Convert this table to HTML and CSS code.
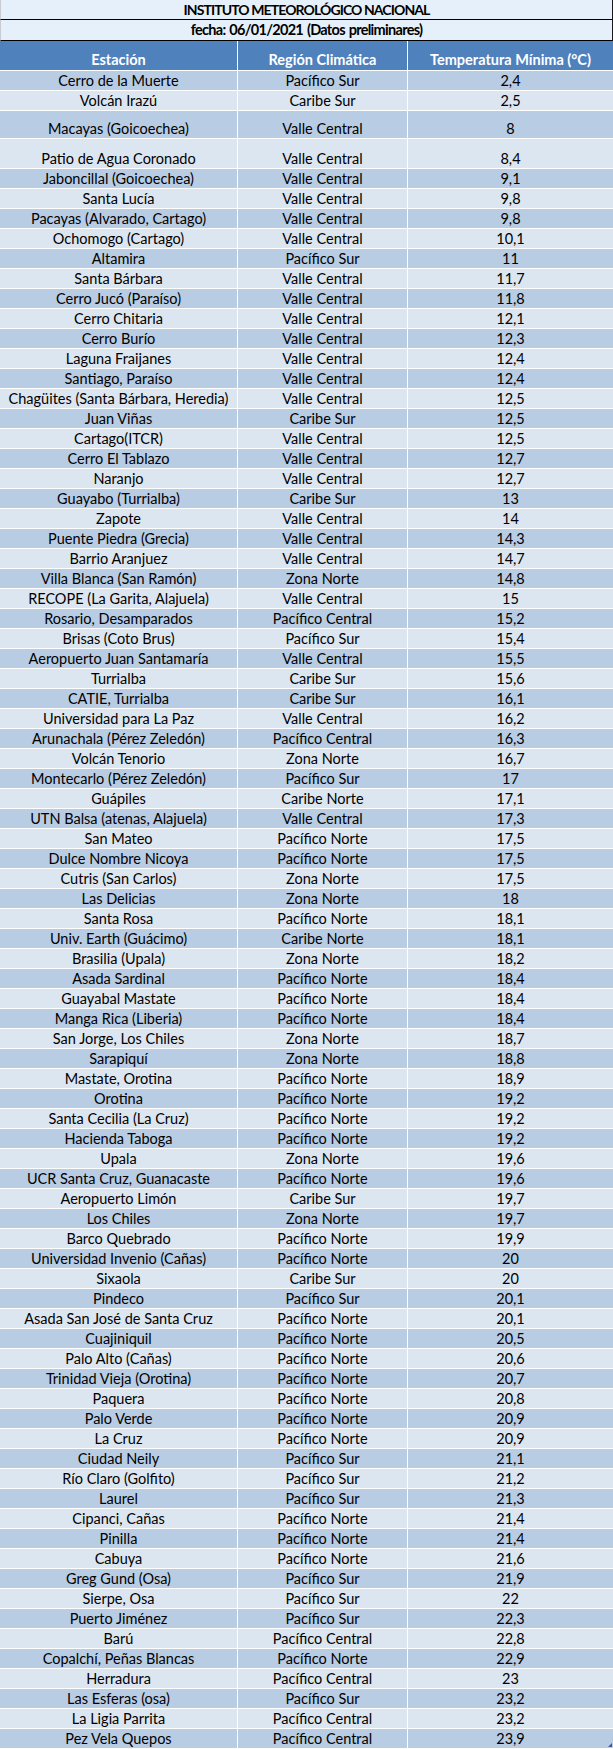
FILE: index.html
```html
<!DOCTYPE html>
<html lang="es">
<head>
<meta charset="utf-8">
<title>Temperatura Mínima</title>
<link rel="stylesheet" href="styles.css">
</head>
<body>
<div class="sheet">
  <div class="title">INSTITUTO METEOROLÓGICO NACIONAL</div>
  <div class="title sub">fecha: 06/01/2021 (Datos preliminares)</div>
  <div class="grid">
    <div class="hd">Estación</div><div class="hd">Región Climática</div><div class="hd">Temperatura Mínima (°C)</div>
    <div class="c d">Cerro de la Muerte</div><div class="c d">Pacífico Sur</div><div class="c d">2,4</div>
    <div class="c l">Volcán Irazú</div><div class="c l">Caribe Sur</div><div class="c l">2,5</div>
    <div class="c d">Macayas (Goicoechea)</div><div class="c d">Valle Central</div><div class="c d">8</div>
    <div class="c l">Patio de Agua Coronado</div><div class="c l">Valle Central</div><div class="c l">8,4</div>
    <div class="c d">Jaboncillal (Goicoechea)</div><div class="c d">Valle Central</div><div class="c d">9,1</div>
    <div class="c l">Santa Lucía</div><div class="c l">Valle Central</div><div class="c l">9,8</div>
    <div class="c d">Pacayas (Alvarado, Cartago)</div><div class="c d">Valle Central</div><div class="c d">9,8</div>
    <div class="c l">Ochomogo (Cartago)</div><div class="c l">Valle Central</div><div class="c l">10,1</div>
    <div class="c d">Altamira</div><div class="c d">Pacífico Sur</div><div class="c d">11</div>
    <div class="c l">Santa Bárbara</div><div class="c l">Valle Central</div><div class="c l">11,7</div>
    <div class="c d">Cerro Jucó (Paraíso)</div><div class="c d">Valle Central</div><div class="c d">11,8</div>
    <div class="c l">Cerro Chitaria</div><div class="c l">Valle Central</div><div class="c l">12,1</div>
    <div class="c d">Cerro Burío</div><div class="c d">Valle Central</div><div class="c d">12,3</div>
    <div class="c l">Laguna Fraijanes</div><div class="c l">Valle Central</div><div class="c l">12,4</div>
    <div class="c d">Santiago, Paraíso</div><div class="c d">Valle Central</div><div class="c d">12,4</div>
    <div class="c l">Chagüites (Santa Bárbara, Heredia)</div><div class="c l">Valle Central</div><div class="c l">12,5</div>
    <div class="c d">Juan Viñas</div><div class="c d">Caribe Sur</div><div class="c d">12,5</div>
    <div class="c l">Cartago(ITCR)</div><div class="c l">Valle Central</div><div class="c l">12,5</div>
    <div class="c d">Cerro El Tablazo</div><div class="c d">Valle Central</div><div class="c d">12,7</div>
    <div class="c l">Naranjo</div><div class="c l">Valle Central</div><div class="c l">12,7</div>
    <div class="c d">Guayabo (Turrialba)</div><div class="c d">Caribe Sur</div><div class="c d">13</div>
    <div class="c l">Zapote</div><div class="c l">Valle Central</div><div class="c l">14</div>
    <div class="c d">Puente Piedra (Grecia)</div><div class="c d">Valle Central</div><div class="c d">14,3</div>
    <div class="c l">Barrio Aranjuez</div><div class="c l">Valle Central</div><div class="c l">14,7</div>
    <div class="c d">Villa Blanca (San Ramón)</div><div class="c d">Zona Norte</div><div class="c d">14,8</div>
    <div class="c l">RECOPE (La Garita, Alajuela)</div><div class="c l">Valle Central</div><div class="c l">15</div>
    <div class="c d">Rosario, Desamparados</div><div class="c d">Pacífico Central</div><div class="c d">15,2</div>
    <div class="c l">Brisas (Coto Brus)</div><div class="c l">Pacífico Sur</div><div class="c l">15,4</div>
    <div class="c d">Aeropuerto Juan Santamaría</div><div class="c d">Valle Central</div><div class="c d">15,5</div>
    <div class="c l">Turrialba</div><div class="c l">Caribe Sur</div><div class="c l">15,6</div>
    <div class="c d">CATIE, Turrialba</div><div class="c d">Caribe Sur</div><div class="c d">16,1</div>
    <div class="c l">Universidad para La Paz</div><div class="c l">Valle Central</div><div class="c l">16,2</div>
    <div class="c d">Arunachala (Pérez Zeledón)</div><div class="c d">Pacífico Central</div><div class="c d">16,3</div>
    <div class="c l">Volcán Tenorio</div><div class="c l">Zona Norte</div><div class="c l">16,7</div>
    <div class="c d">Montecarlo (Pérez Zeledón)</div><div class="c d">Pacífico Sur</div><div class="c d">17</div>
    <div class="c l">Guápiles</div><div class="c l">Caribe Norte</div><div class="c l">17,1</div>
    <div class="c d">UTN Balsa (atenas, Alajuela)</div><div class="c d">Valle Central</div><div class="c d">17,3</div>
    <div class="c l">San Mateo</div><div class="c l">Pacífico Norte</div><div class="c l">17,5</div>
    <div class="c d">Dulce Nombre Nicoya</div><div class="c d">Pacífico Norte</div><div class="c d">17,5</div>
    <div class="c l">Cutris (San Carlos)</div><div class="c l">Zona Norte</div><div class="c l">17,5</div>
    <div class="c d">Las Delicias</div><div class="c d">Zona Norte</div><div class="c d">18</div>
    <div class="c l">Santa Rosa</div><div class="c l">Pacífico Norte</div><div class="c l">18,1</div>
    <div class="c d">Univ. Earth (Guácimo)</div><div class="c d">Caribe Norte</div><div class="c d">18,1</div>
    <div class="c l">Brasilia (Upala)</div><div class="c l">Zona Norte</div><div class="c l">18,2</div>
    <div class="c d">Asada Sardinal</div><div class="c d">Pacífico Norte</div><div class="c d">18,4</div>
    <div class="c l">Guayabal Mastate</div><div class="c l">Pacífico Norte</div><div class="c l">18,4</div>
    <div class="c d">Manga Rica (Liberia)</div><div class="c d">Pacífico Norte</div><div class="c d">18,4</div>
    <div class="c l">San Jorge, Los Chiles</div><div class="c l">Zona Norte</div><div class="c l">18,7</div>
    <div class="c d">Sarapiquí</div><div class="c d">Zona Norte</div><div class="c d">18,8</div>
    <div class="c l">Mastate, Orotina</div><div class="c l">Pacífico Norte</div><div class="c l">18,9</div>
    <div class="c d">Orotina</div><div class="c d">Pacífico Norte</div><div class="c d">19,2</div>
    <div class="c l">Santa Cecilia (La Cruz)</div><div class="c l">Pacífico Norte</div><div class="c l">19,2</div>
    <div class="c d">Hacienda Taboga</div><div class="c d">Pacífico Norte</div><div class="c d">19,2</div>
    <div class="c l">Upala</div><div class="c l">Zona Norte</div><div class="c l">19,6</div>
    <div class="c d">UCR Santa Cruz, Guanacaste</div><div class="c d">Pacífico Norte</div><div class="c d">19,6</div>
    <div class="c l">Aeropuerto Limón</div><div class="c l">Caribe Sur</div><div class="c l">19,7</div>
    <div class="c d">Los Chiles</div><div class="c d">Zona Norte</div><div class="c d">19,7</div>
    <div class="c l">Barco Quebrado</div><div class="c l">Pacífico Norte</div><div class="c l">19,9</div>
    <div class="c d">Universidad Invenio (Cañas)</div><div class="c d">Pacífico Norte</div><div class="c d">20</div>
    <div class="c l">Sixaola</div><div class="c l">Caribe Sur</div><div class="c l">20</div>
    <div class="c d">Pindeco</div><div class="c d">Pacífico Sur</div><div class="c d">20,1</div>
    <div class="c l">Asada San José de Santa Cruz</div><div class="c l">Pacífico Norte</div><div class="c l">20,1</div>
    <div class="c d">Cuajiniquil</div><div class="c d">Pacífico Norte</div><div class="c d">20,5</div>
    <div class="c l">Palo Alto (Cañas)</div><div class="c l">Pacífico Norte</div><div class="c l">20,6</div>
    <div class="c d">Trinidad Vieja (Orotina)</div><div class="c d">Pacífico Norte</div><div class="c d">20,7</div>
    <div class="c l">Paquera</div><div class="c l">Pacífico Norte</div><div class="c l">20,8</div>
    <div class="c d">Palo Verde</div><div class="c d">Pacífico Norte</div><div class="c d">20,9</div>
    <div class="c l">La Cruz</div><div class="c l">Pacífico Norte</div><div class="c l">20,9</div>
    <div class="c d">Ciudad Neily</div><div class="c d">Pacífico Sur</div><div class="c d">21,1</div>
    <div class="c l">Río Claro (Golfito)</div><div class="c l">Pacífico Sur</div><div class="c l">21,2</div>
    <div class="c d">Laurel</div><div class="c d">Pacífico Sur</div><div class="c d">21,3</div>
    <div class="c l">Cipanci, Cañas</div><div class="c l">Pacífico Norte</div><div class="c l">21,4</div>
    <div class="c d">Pinilla</div><div class="c d">Pacífico Norte</div><div class="c d">21,4</div>
    <div class="c l">Cabuya</div><div class="c l">Pacífico Norte</div><div class="c l">21,6</div>
    <div class="c d">Greg Gund (Osa)</div><div class="c d">Pacífico Sur</div><div class="c d">21,9</div>
    <div class="c l">Sierpe, Osa</div><div class="c l">Pacífico Sur</div><div class="c l">22</div>
    <div class="c d">Puerto Jiménez</div><div class="c d">Pacífico Sur</div><div class="c d">22,3</div>
    <div class="c l">Barú</div><div class="c l">Pacífico Central</div><div class="c l">22,8</div>
    <div class="c d">Copalchí, Peñas Blancas</div><div class="c d">Pacífico Norte</div><div class="c d">22,9</div>
    <div class="c l">Herradura</div><div class="c l">Pacífico Central</div><div class="c l">23</div>
    <div class="c d">Las Esferas (osa)</div><div class="c d">Pacífico Sur</div><div class="c d">23,2</div>
    <div class="c l">La Ligia Parrita</div><div class="c l">Pacífico Central</div><div class="c l">23,2</div>
    <div class="c d">Pez Vela Quepos</div><div class="c d">Pacífico Central</div><div class="c d">23,9</div>
  </div>
  <div class="handle"></div>
</div>
</body>
</html>
```
FILE: styles.css
```css
html, body {
  margin: 0;
  padding: 0;
  background: #ffffff;
}
.sheet {
  position: relative;
  width: 613px;
  font-family: Lato, "Open Sans", "Liberation Sans", sans-serif;
  font-size: 14.5px;
  color: #000;
}
.title {
  height: 20px;
  box-sizing: border-box;
  border-bottom: 1px solid #000;
  border-right: 1px solid #1a1a1a;
  border-left: 1px solid #c8ccd2;
  background: #e6f0fa;
  font-weight: 700;
  font-size: 14px;
  letter-spacing: -0.9px;
  text-align: center;
  line-height: 19px;
}
.title.sub {
  height: 21px;
  line-height: 20px;
  font-size: 14.5px;
  letter-spacing: -0.7px;
  word-spacing: 1px;
}
.grid {
  display: grid;
  grid-template-columns: 237px 169px 1fr;
  grid-template-rows: 29px 19px 19px 27px 29px;
  grid-auto-rows: 19px;
  gap: 1px;
  background: #ffffff;
}
.hd {
  background: #4f81bd;
  color: #ffffff;
  font-weight: 700;
  display: flex;
  align-items: flex-end;
  justify-content: center;
  line-height: 18px;
  padding-bottom: 1px;
}
.c {
  display: flex;
  align-items: flex-end;
  justify-content: center;
  line-height: 18px;
  white-space: nowrap;
}
.d { background: #b8cce4; }
.l { background: #dce6f1; }
.handle {
  position: absolute;
  right: 1px;
  bottom: 1px;
  width: 0;
  height: 0;
  border-left: 4px solid transparent;
  border-bottom: 4px solid #3d5a99;
}
```
